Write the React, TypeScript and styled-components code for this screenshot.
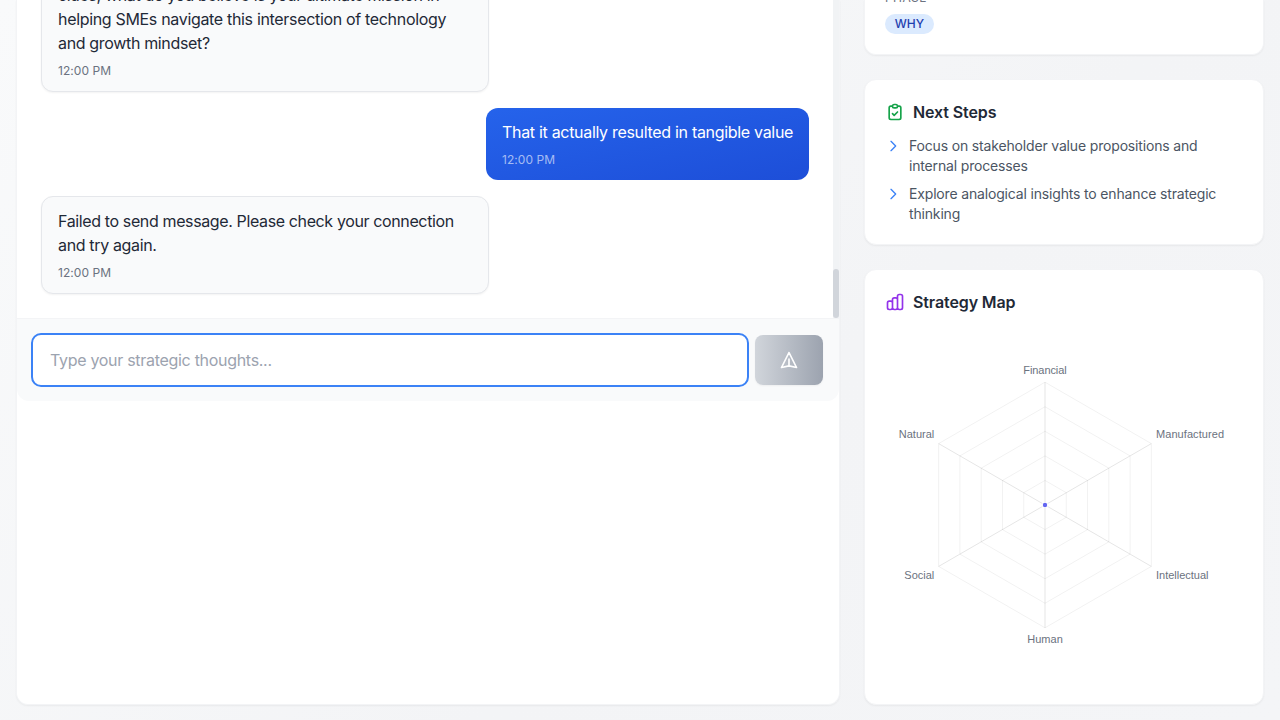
import React from 'react';
import styled, { createGlobalStyle } from 'styled-components';

const GlobalStyle = createGlobalStyle`
  *, *::before, *::after { box-sizing: border-box; }
  html, body { margin: 0; height: 720px; overflow: hidden; }
  body { font-family: Inter, "Liberation Sans", sans-serif; color: #1f2937; }
  h3, p, ul { margin: 0; padding: 0; }
`;

const Page = styled.main`
  display: grid;
  grid-template-columns: 824px 400px;
  gap: 24px;
  height: 720px;
  padding: 0 16px 15px;
  overflow: hidden;
  background: linear-gradient(135deg, #f9fafb 0%, #f3f4f6 60%, #f4f5f7 100%);
`;

const Card = styled.section`
  background: #fff;
  border: 1px solid #f3f4f6;
  border-radius: 12px;
  box-shadow: 0 1px 2px rgba(0, 0, 0, 0.05);
`;

const ChatCard = styled(Card)`
  display: flex;
  flex-direction: column;
  border-top: 0;
  border-radius: 0 0 12px 12px;
`;

const ChatViewport = styled.div`
  display: flex;
  height: 318px;
  overflow: hidden;
`;

const Messages = styled.div`
  flex: 1;
  display: flex;
  flex-direction: column;
  justify-content: flex-end;
  gap: 16px;
  padding: 24px;
`;

const ScrollTrack = styled.div`
  display: flex;
  align-items: flex-end;
  width: 6px;
  background: #f1f3f5;
`;

const ScrollThumb = styled.div`
  width: 6px;
  height: 49px;
  border-radius: 3px;
  background: #d1d5db;
`;

const Bubble = styled.article<{ $own?: boolean }>`
  flex: none;
  align-self: ${p => (p.$own ? 'flex-end' : 'flex-start')};
  width: ${p => (p.$own ? '323px' : '448px')};
  padding: 12px 16px;
  border: ${p => (p.$own ? '0' : '1px solid #e5e7eb')};
  border-radius: 12px;
  color: ${p => (p.$own ? '#fff' : '#1f2937')};
  background: ${p => (p.$own ? 'linear-gradient(to bottom right, #2563eb, #1d4ed8)' : '#f9fafb')};
  box-shadow: ${p => (p.$own ? 'none' : '0 1px 2px rgba(0, 0, 0, 0.05)')};
`;

const Line = styled.p<{ $track: number }>`
  font-size: 16px;
  line-height: 24px;
  letter-spacing: ${p => p.$track}px;
  white-space: nowrap;
`;

const Time = styled.time<{ $own?: boolean }>`
  display: block;
  margin-top: 8px;
  font-size: 12px;
  line-height: 16px;
  letter-spacing: 0.05px;
  color: ${p => (p.$own ? 'rgba(255, 255, 255, 0.6)' : '#6b7280')};
`;

const Composer = styled.form`
  display: flex;
  align-items: center;
  gap: 6px;
  height: 83px;
  padding: 0 16px 0 14px;
  border-top: 1px solid #f3f4f6;
  border-radius: 0 0 12px 12px;
  background: #f9fafb;
`;

const Input = styled.input`
  flex: 1;
  height: 54px;
  padding: 0 17px;
  border: 2px solid #3b82f6;
  border-radius: 10px;
  outline: 0;
  background: #fff;
  font: 16px/24px Inter, sans-serif;
  letter-spacing: -0.3px;
  &::placeholder { color: #9ca3af; opacity: 1; }
`;

const SendButton = styled.button`
  display: flex;
  align-items: center;
  justify-content: center;
  width: 68px;
  height: 50px;
  padding: 0;
  border: 0;
  border-radius: 8px;
  color: #fff;
  background: linear-gradient(to right, #d1d5db, #9ca3af);
  box-shadow: 0 1px 2px rgba(0, 0, 0, 0.05);
`;

const Sidebar = styled.aside`
  display: flex;
  flex-direction: column;
  gap: 24px;
`;

const PhaseCard = styled(Card)`
  display: flex;
  flex-direction: column;
  justify-content: flex-end;
  align-items: flex-start;
  flex: none;
  height: 55px;
  padding: 0 20px 20px;
  border-top: 0;
  border-radius: 0 0 12px 12px;
`;

const PhaseLabel = styled.span`
  margin-bottom: 8px;
  font-size: 12px;
  line-height: 16px;
  letter-spacing: 0.4px;
  color: #6b7280;
`;

const Pill = styled.span`
  flex: none;
  width: 49px;
  border-radius: 10px;
  background: #dbeafe;
  color: #1e40af;
  font-size: 12px;
  font-weight: 500;
  line-height: 20px;
  text-align: center;
`;

const StepsCard = styled(Card)`
  flex: none;
  height: 166px;
  padding: 20px;
`;

const MapCard = styled(Card)`
  flex: none;
  height: 436px;
  padding: 20px;
`;

const Heading = styled.h3`
  display: flex;
  align-items: center;
  gap: 8px;
  font-size: 16px;
  font-weight: 600;
  line-height: 24px;
  letter-spacing: -0.11px;
`;

const StepList = styled.ul`
  display: flex;
  flex-direction: column;
  gap: 8px;
  margin-top: 12px;
  list-style: none;
`;

const Step = styled.li`
  display: flex;
  gap: 8px;
  font-size: 14px;
  line-height: 20px;
  color: #4b5563;
  svg { margin-top: 2px; }
`;

const StepText = styled.div`
  letter-spacing: -0.165px;
  white-space: nowrap;
`;

const IconSvg = styled.svg<{ $color?: string }>`
  flex: none;
  fill: none;
  stroke: ${p => p.$color ?? 'currentColor'};
  stroke-width: 2;
  stroke-linecap: round;
  stroke-linejoin: round;
`;

const Chart = styled.svg`
  display: block;
  margin-top: 16px;
  font-family: "Liberation Sans", Arial, sans-serif;
  font-size: 11px;
`;

const Icon = ({ d, size = 20, color }: { d: string; size?: number; color?: string }) => (
  <IconSvg width={size} height={size} viewBox="0 0 24 24" $color={color}>
    <path d={d} />
  </IconSvg>
);

const CLIPBOARD =
  'M9 5H7a2 2 0 00-2 2v12a2 2 0 002 2h10a2 2 0 002-2V7a2 2 0 00-2-2h-2M9 5a2 2 0 002 2h2a2 2 0 002-2M9 5a2 2 0 012-2h2a2 2 0 012 2m-6 9l2 2 4-4';
const BARS =
  'M9 19v-6a2 2 0 00-2-2H5a2 2 0 00-2 2v6a2 2 0 002 2h2a2 2 0 002-2zm0 0V9a2 2 0 012-2h2a2 2 0 012 2v10m-6 0a2 2 0 002 2h2a2 2 0 002-2m0 0V5a2 2 0 012-2h2a2 2 0 012 2v14a2 2 0 01-2 2h-2a2 2 0 01-2-2z';
const PLANE = 'M12 19l9 2-9-18-9 18 9-2zm0 0v-8';
const CHEVRON = 'M9 5l7 7-7 7';

const CX = 160;
const CY = 175;
const RADIUS = 122.8;

const vertex = (i: number, r: number) => {
  const a = (Math.PI / 3) * i - Math.PI / 2;
  return [CX + r * Math.cos(a), CY + r * Math.sin(a)];
};

const labels: { text: string; x: number; y: number; anchor: 'start' | 'middle' | 'end'; w: number }[] = [
  { text: 'Financial', x: 160, y: 44, anchor: 'middle', w: 43.5 },
  { text: 'Manufactured', x: 271, y: 108, anchor: 'start', w: 68 },
  { text: 'Intellectual', x: 271, y: 249, anchor: 'start', w: 52.5 },
  { text: 'Human', x: 160, y: 313, anchor: 'middle', w: 35.5 },
  { text: 'Social', x: 49.3, y: 249, anchor: 'end', w: 30 },
  { text: 'Natural', x: 49.3, y: 108, anchor: 'end', w: 35.5 },
];

const RadarChart = () => (
  <Chart width="358" height="350" viewBox="0 0 358 350">
    {[1, 2, 3, 4, 5].map(n => (
      <polygon
        key={n}
        points={[0, 1, 2, 3, 4, 5].map(i => vertex(i, (RADIUS * n) / 5).join(',')).join(' ')}
        fill="none"
        stroke="rgba(0,0,0,0.055)"
      />
    ))}
    {[0, 1, 2, 3, 4, 5].map(i => {
      const [x, y] = vertex(i, RADIUS);
      const [sx, sy] = vertex(i, 3);
      return <line key={i} x1={sx} y1={sy} x2={x} y2={y} stroke="rgba(0,0,0,0.1)" />;
    })}
    <circle cx={CX} cy={CY} r="2.2" fill="#6366f1" />
    {labels.map(l => (
      <text key={l.text} x={l.x} y={l.y} textAnchor={l.anchor} textLength={l.w} fill="#6b7280">
        {l.text}
      </text>
    ))}
  </Chart>
);

export default function App() {
  return (
    <>
      <GlobalStyle />
      <Page>
        <ChatCard>
          <ChatViewport>
            <Messages>
              <Bubble>
                <Line $track={-0.35}>clues, what do you believe is your ultimate mission in</Line>
                <Line $track={-0.325}>helping SMEs navigate this intersection of technology</Line>
                <Line $track={-0.34}>and growth mindset?</Line>
                <Time>12:00 PM</Time>
              </Bubble>
              <Bubble $own>
                <Line $track={-0.31}>That it actually resulted in tangible value</Line>
                <Time $own>12:00 PM</Time>
              </Bubble>
              <Bubble>
                <Line $track={-0.375}>Failed to send message. Please check your connection</Line>
                <Line $track={-0.35}>and try again.</Line>
                <Time>12:00 PM</Time>
              </Bubble>
            </Messages>
            <ScrollTrack>
              <ScrollThumb />
            </ScrollTrack>
          </ChatViewport>
          <Composer onSubmit={e => e.preventDefault()}>
            <Input placeholder="Type your strategic thoughts..." />
            <SendButton type="submit" aria-label="Send">
              <Icon d={PLANE} />
            </SendButton>
          </Composer>
        </ChatCard>
        <Sidebar>
          <PhaseCard>
            <PhaseLabel>PHASE</PhaseLabel>
            <Pill>WHY</Pill>
          </PhaseCard>
          <StepsCard>
            <Heading>
              <Icon d={CLIPBOARD} color="#16a34a" />
              Next Steps
            </Heading>
            <StepList>
              <Step>
                <Icon d={CHEVRON} size={16} color="#3b82f6" />
                <StepText>
                  Focus on stakeholder value propositions and
                  <br />
                  internal processes
                </StepText>
              </Step>
              <Step>
                <Icon d={CHEVRON} size={16} color="#3b82f6" />
                <StepText>
                  Explore analogical insights to enhance strategic
                  <br />
                  thinking
                </StepText>
              </Step>
            </StepList>
          </StepsCard>
          <MapCard>
            <Heading>
              <Icon d={BARS} color="#9333ea" />
              Strategy Map
            </Heading>
            <RadarChart />
          </MapCard>
        </Sidebar>
      </Page>
    </>
  );
}
